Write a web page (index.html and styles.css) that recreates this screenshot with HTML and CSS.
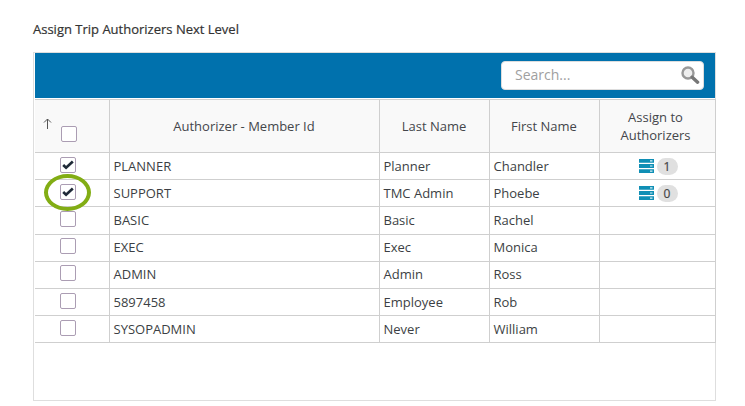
FILE: index.html
```html
<!DOCTYPE html>
<html lang="en">
<head>
<meta charset="utf-8">
<title>Assign Trip Authorizers Next Level</title>
<link rel="stylesheet" href="styles.css">
</head>
<body>
<h1 class="title">Assign Trip Authorizers Next Level</h1>
<section class="panel">
  <div class="toolbar">
    <div class="search">
      <span class="search-text">Search...</span>
      <svg class="search-icon" width="20" height="20" viewBox="0 0 20 20"><circle cx="8" cy="8" r="5.5" fill="#eee" stroke="#999" stroke-width="2.4"/><path d="M12.2 12.2 L17.6 17.2" stroke="#777" stroke-width="3.4" stroke-linecap="round"/></svg>
    </div>
  </div>
  <table class="grid">
    <colgroup><col class="c1"><col class="c2"><col class="c3"><col class="c4"><col class="c5"></colgroup>
    <thead>
      <tr>
        <th class="sel-head"><svg class="arrow" width="9" height="11" viewBox="0 0 9 11"><path d="M4.5 11V1M1 4.5L4.5 1L8 4.5" fill="none" stroke="#555" stroke-width="1"/></svg><span class="box head-box"></span></th>
        <th>Authorizer - Member Id</th>
        <th>Last Name</th>
        <th>First Name</th>
        <th class="assign-head">Assign to<br>Authorizers</th>
      </tr>
    </thead>
    <tbody>
      <tr>
        <td class="sel"><span class="box"><svg width="16" height="14" viewBox="0 0 16 14"><path d="M2.5 7 L5.8 10.2 L13.5 3" fill="none" stroke="#1f2a38" stroke-width="3"/></svg></span></td>
        <td>PLANNER</td><td>Planner</td><td>Chandler</td>
        <td class="assign"><svg class="stack" width="15" height="14" viewBox="0 0 15 14"><path d="M0 0H15V3.8H0ZM0 5.1H15V8.9H0ZM0 10.2H15V14H0Z" fill="#0f8fb5"/><path d="M11 1.9H13.5M11 7H13.5M11 12.1H13.5" stroke="#d8f0f7" stroke-width="1.2"/></svg><span class="count">1</span></td>
      </tr>
      <tr>
        <td class="sel"><span class="box"><svg width="16" height="14" viewBox="0 0 16 14"><path d="M2.5 7 L5.8 10.2 L13.5 3" fill="none" stroke="#1f2a38" stroke-width="3"/></svg></span><span class="ring"></span></td>
        <td>SUPPORT</td><td>TMC Admin</td><td>Phoebe</td>
        <td class="assign"><svg class="stack" width="15" height="14" viewBox="0 0 15 14"><path d="M0 0H15V3.8H0ZM0 5.1H15V8.9H0ZM0 10.2H15V14H0Z" fill="#0f8fb5"/><path d="M11 1.9H13.5M11 7H13.5M11 12.1H13.5" stroke="#d8f0f7" stroke-width="1.2"/></svg><span class="count">0</span></td>
      </tr>
      <tr><td class="sel"><span class="box"></span></td><td>BASIC</td><td>Basic</td><td>Rachel</td><td></td></tr>
      <tr><td class="sel"><span class="box"></span></td><td>EXEC</td><td>Exec</td><td>Monica</td><td></td></tr>
      <tr><td class="sel"><span class="box"></span></td><td>ADMIN</td><td>Admin</td><td>Ross</td><td></td></tr>
      <tr><td class="sel"><span class="box"></span></td><td>5897458</td><td>Employee</td><td>Rob</td><td></td></tr>
      <tr><td class="sel"><span class="box"></span></td><td>SYSOPADMIN</td><td>Never</td><td>William</td><td></td></tr>
    </tbody>
  </table>
</section>
</body>
</html>
```
FILE: styles.css
```css
html, body { margin: 0; padding: 0; background: #fff; }
body { padding: 21px 29px 0 33px; font-family: "Open Sans", sans-serif; color: #3c3f44; font-size: 13px; }
.title { margin: 0 0 15px; font-size: 13px; line-height: 16px; font-weight: 400; color: #333; -webkit-text-stroke: 0.2px #333; }
.panel { width: 680px; height: 347px; border: 1px solid #dedede; padding: 0 0 0 1px; }
.toolbar { height: 45px; background: #0071ad; display: flex; justify-content: flex-end; align-items: center; padding-right: 11px; margin-bottom: 1px; }
.search { width: 203px; height: 29px; box-sizing: border-box; background: #fff; border-radius: 4px; border: 1px solid #ddd; display: flex; align-items: center; justify-content: space-between; padding: 0 3px 2px 13px; }
.search-text { color: #a0a0a0; font-size: 14px; }
.search-icon { display: block; }
.grid { border-collapse: collapse; table-layout: fixed; width: 680px; }
.c1 { width: 74px; } .c2 { width: 270px; } .c3 { width: 110px; } .c4 { width: 110px; } .c5 { width: 116px; }
.grid th, .grid td { border: 1px solid #cfcfcf; padding: 0 4px 1px; height: 26px; box-sizing: border-box; font-size: 13px; font-weight: 400; text-align: left; line-height: 18px; white-space: nowrap; }
.grid tbody td { height: 27.2px; }
.grid tr > :first-child { border-left: 0; }
.grid thead th { height: 53px; background: #f9f9f9; text-align: center; padding: 0 4px 0; color: #44464b; line-height: 18px; border-top: 1px solid #cfcfcf; }
.grid thead th.assign-head { padding: 0 7px 0 4px; }
.grid thead th.sel-head { position: relative; text-align: left; padding: 0; }
.arrow { position: absolute; left: 8px; top: 18px; display: block; }
.box { display: inline-flex; align-items: center; justify-content: center; width: 16px; height: 16px; box-sizing: border-box; background: #fff; border: 1px solid #ab9db3; border-radius: 2px; vertical-align: top; }
.head-box { position: absolute; left: 26px; top: 26px; }
.grid td.sel { position: relative; text-align: center; padding: 0 7px 3px 0; line-height: 0; }
.ring { position: absolute; left: 9px; top: -6px; width: 47px; height: 37px; box-sizing: border-box; border: 4px solid #82ad14; border-radius: 50%; }
.grid td.assign { text-align: center; padding: 0 0 0 2px; line-height: 0; }
.stack { vertical-align: middle; margin-right: 3px; }
.count { display: inline-block; width: 21px; height: 17px; line-height: 17px; border-radius: 9px; background: #e0e0e0; text-align: center; font-size: 12px; -webkit-text-stroke: 0.2px #444; vertical-align: middle; color: #444; }
```
